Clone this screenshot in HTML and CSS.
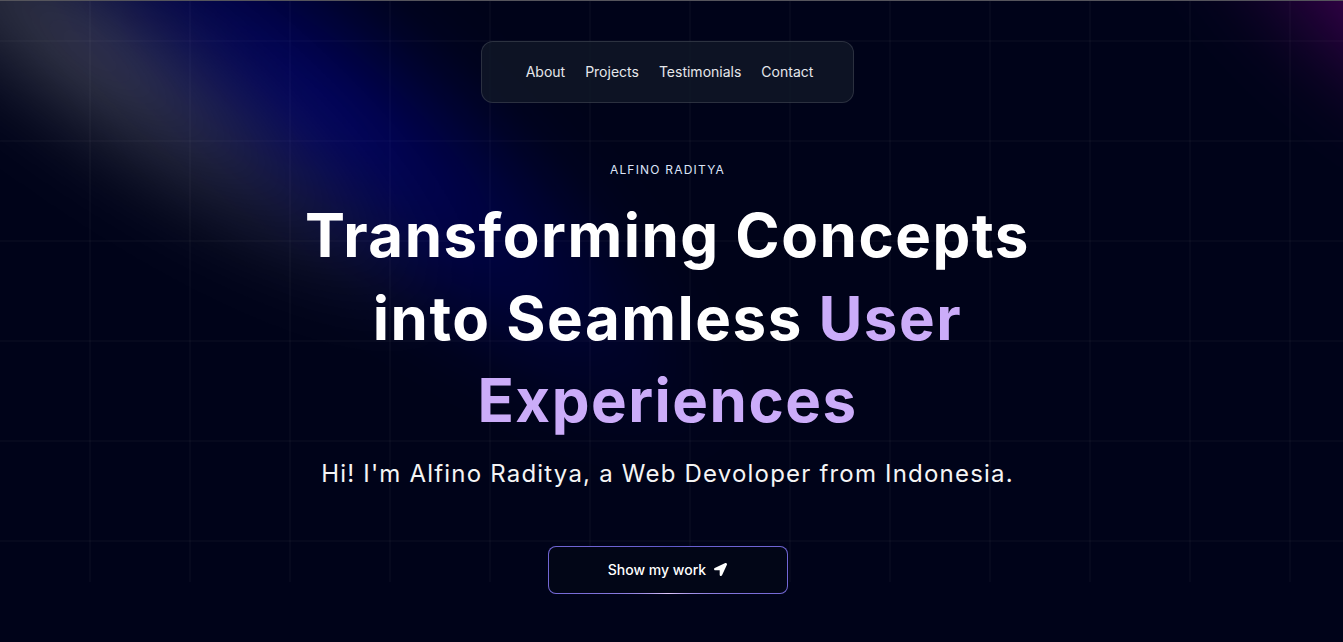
FILE: index.html
```html
<!DOCTYPE html>
<html>

<head>
    <meta name="viewport" content="width=device-width, initial-scale=1.0" />
    <title>Alfino Raditya</title>
    <link rel="stylesheet" href="styles.css">
</head>

<body>
    <div class="page">
        <div class="backdrop">
            <div class="grid"></div>
            <div class="glow glow-white"></div>
            <div class="glow glow-blue"></div>
            <div class="glow glow-purple"></div>
        </div>

        <header class="topbar">
            <nav class="nav">
                <a href="#about">About</a>
                <a href="#projects">Projects</a>
                <a href="#testimonials">Testimonials</a>
                <a href="#contact">Contact</a>
            </nav>
        </header>

        <main class="hero">
            <p class="eyebrow">Alfino Raditya</p>
            <h1 class="title">Transforming Concepts into Seamless <span class="accent">User Experiences</span></h1>
            <p class="intro">Hi! I'm Alfino Raditya, a Web Devoloper from Indonesia.</p>
            <a class="cta" href="#projects">
                <span class="cta-inner">
                    Show my work
                    <svg class="cta-icon" viewBox="0 0 512 512" width="13" height="13">
                        <path fill="currentColor" d="M444.52 3.52L28.74 195.42c-47.97 22.39-31.98 92.75 19.19 92.75h175.91v175.91c0 51.17 70.36 67.17 92.75 19.19l191.9-415.78c15.99-38.390-25.59-79.97-63.97-63.970z" />
                    </svg>
                </span>
            </a>
        </main>
    </div>
</body>

</html>
```

FILE: styles.css
```css
html,
body {
    margin: 0;
    height: 100%;
}

body {
    background: #000319;
    color: #ffffff;
    font-family: Inter, "Noto Sans", sans-serif;
    overflow: hidden;
}

.page {
    position: relative;
    min-height: 100vh;
    padding-right: 8px;
    border-top: 1px solid #55555c;
    box-sizing: border-box;
    overflow: hidden;
}

/* background layers */
.backdrop {
    position: absolute;
    inset: 0;
    pointer-events: none;
}

.grid {
    position: absolute;
    top: 0;
    left: 0;
    right: 0;
    height: 581px;
    background-image:
        linear-gradient(to right, rgba(255, 255, 255, 0.022) 2px, transparent 2px),
        linear-gradient(to bottom, rgba(255, 255, 255, 0.022) 2px, transparent 2px);
    background-size: 100px 100px;
    background-position: 89px 39px;
}

.glow {
    position: absolute;
    border-radius: 50%;
    filter: blur(30px);
}

.glow-white {
    left: -360px;
    top: -60px;
    width: 900px;
    height: 220px;
    transform: rotate(36deg);
    background: radial-gradient(closest-side, rgba(255, 255, 255, 0.23), rgba(255, 255, 255, 0.09) 55%, transparent);
}

.glow-blue {
    left: -170px;
    top: -20px;
    width: 1000px;
    height: 260px;
    transform: rotate(40deg);
    background: radial-gradient(closest-side, rgba(0, 0, 255, 0.32), rgba(0, 0, 255, 0.12) 60%, transparent);
}

.glow-purple {
    left: 1080px;
    top: -150px;
    width: 640px;
    height: 280px;
    transform: rotate(40deg);
    background: radial-gradient(closest-side, rgba(150, 0, 160, 0.5), rgba(150, 0, 160, 0.16) 60%, transparent);
}

/* nav */
.topbar {
    position: relative;
    display: flex;
    justify-content: center;
    padding-top: 40px;
}

.nav {
    display: flex;
    gap: 16px;
    padding: 20px 40px;
    border: 1px solid rgba(255, 255, 255, 0.125);
    border-radius: 12px;
    background: rgba(17, 25, 40, 0.75);
}

.nav a {
    padding-left: 4px;
    color: #e5e7eb;
    font-size: 14px;
    line-height: 20px;
    text-decoration: none;
}

/* hero */
.hero {
    position: relative;
    display: flex;
    flex-direction: column;
    align-items: center;
    padding-top: 59px;
}

.eyebrow {
    margin: 0;
    color: #dde4f8;
    font-size: 12px;
    line-height: 16px;
    letter-spacing: 0.1em;
    text-transform: uppercase;
}

.title {
    max-width: 60vw;
    margin: 16px 0;
    font-size: 60px;
    font-weight: 700;
    line-height: 1.375;
    letter-spacing: 0.025em;
    text-align: center;
}

.accent {
    color: #cbacf9;
}

.intro {
    margin: 0 0 16px;
    font-size: 24px;
    line-height: 32px;
    letter-spacing: 0.05em;
    text-align: center;
    color: #f5f5f5;
}

.cta {
    display: block;
    width: 240px;
    height: 48px;
    margin-top: 40px;
    padding: 1px;
    box-sizing: border-box;
    border-radius: 8px;
    background: conic-gradient(from 180deg at 50% 50%, #e2cbff 0%, #7468d6 22%, #5d58c9 50%, #7468d6 78%, #e2cbff 100%);
    text-decoration: none;
}

.cta-inner {
    display: flex;
    align-items: center;
    justify-content: center;
    gap: 8px;
    height: 100%;
    border-radius: 7px;
    background: #020617;
    color: #ffffff;
    font-size: 14px;
    font-weight: 500;
}

.cta-icon {
    display: block;
}
```
